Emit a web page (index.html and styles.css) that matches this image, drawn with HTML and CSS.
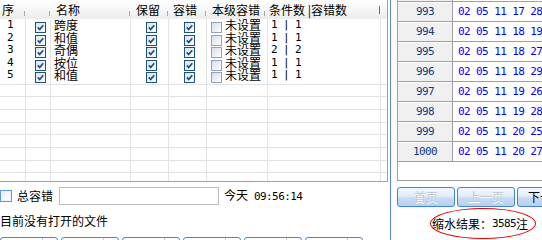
FILE: index.html
```html
<!DOCTYPE html>
<html lang="zh">
<head>
<meta charset="utf-8">
<link rel="stylesheet" href="styles.css">
</head>
<body>
<div class="app">
  <div class="left">
    <div class="table">
      <div class="row head">
        <div class="hc c1"><span>序</span><i class="sep"></i></div>
        <div class="hc c2"><i class="sep"></i></div>
        <div class="hc c3"><span>名称</span><i class="sep"></i></div>
        <div class="hc c4"><span>保留</span><i class="sep"></i></div>
        <div class="hc c5"><span>容错</span><i class="sep"></i></div>
        <div class="hc c6"><span>本级容错</span><i class="sep"></i></div>
        <div class="hc c7"><span>条件数 |容错数</span><i class="sep dark"></i></div>
        <div class="hc c8"></div>
      </div>
      <div class="tbody">
        <div class="row drow">
          <div class="dc c1 num">1</div>
          <div class="dc c2"><span class="cb on"><svg viewBox="0 0 9 9"><path d="M1.8 4.4l1.9 2 3.6-4.2"/></svg></span></div>
          <div class="dc c3">跨度</div>
          <div class="dc c4"><span class="cb on"><svg viewBox="0 0 9 9"><path d="M1.8 4.4l1.9 2 3.6-4.2"/></svg></span></div>
          <div class="dc c5"><span class="cb on"><svg viewBox="0 0 9 9"><path d="M1.8 4.4l1.9 2 3.6-4.2"/></svg></span></div>
          <div class="dc c6"><span class="cb off"></span><span class="lbl">未设置</span></div>
          <div class="dc c7 num">1 | 1</div>
          <div class="dc c8"></div>
        </div>
        <div class="row drow">
          <div class="dc c1 num">2</div>
          <div class="dc c2"><span class="cb on"><svg viewBox="0 0 9 9"><path d="M1.8 4.4l1.9 2 3.6-4.2"/></svg></span></div>
          <div class="dc c3">和值</div>
          <div class="dc c4"><span class="cb on"><svg viewBox="0 0 9 9"><path d="M1.8 4.4l1.9 2 3.6-4.2"/></svg></span></div>
          <div class="dc c5"><span class="cb on"><svg viewBox="0 0 9 9"><path d="M1.8 4.4l1.9 2 3.6-4.2"/></svg></span></div>
          <div class="dc c6"><span class="cb off"></span><span class="lbl">未设置</span></div>
          <div class="dc c7 num">1 | 1</div>
          <div class="dc c8"></div>
        </div>
        <div class="row drow">
          <div class="dc c1 num">3</div>
          <div class="dc c2"><span class="cb on"><svg viewBox="0 0 9 9"><path d="M1.8 4.4l1.9 2 3.6-4.2"/></svg></span></div>
          <div class="dc c3">奇偶</div>
          <div class="dc c4"><span class="cb on"><svg viewBox="0 0 9 9"><path d="M1.8 4.4l1.9 2 3.6-4.2"/></svg></span></div>
          <div class="dc c5"><span class="cb on"><svg viewBox="0 0 9 9"><path d="M1.8 4.4l1.9 2 3.6-4.2"/></svg></span></div>
          <div class="dc c6"><span class="cb off"></span><span class="lbl">未设置</span></div>
          <div class="dc c7 num">2 | 2</div>
          <div class="dc c8"></div>
        </div>
        <div class="row drow">
          <div class="dc c1 num">4</div>
          <div class="dc c2"><span class="cb on"><svg viewBox="0 0 9 9"><path d="M1.8 4.4l1.9 2 3.6-4.2"/></svg></span></div>
          <div class="dc c3">按位</div>
          <div class="dc c4"><span class="cb on"><svg viewBox="0 0 9 9"><path d="M1.8 4.4l1.9 2 3.6-4.2"/></svg></span></div>
          <div class="dc c5"><span class="cb on"><svg viewBox="0 0 9 9"><path d="M1.8 4.4l1.9 2 3.6-4.2"/></svg></span></div>
          <div class="dc c6"><span class="cb off"></span><span class="lbl">未设置</span></div>
          <div class="dc c7 num">1 | 1</div>
          <div class="dc c8"></div>
        </div>
        <div class="row drow">
          <div class="dc c1 num">5</div>
          <div class="dc c2"><span class="cb on"><svg viewBox="0 0 9 9"><path d="M1.8 4.4l1.9 2 3.6-4.2"/></svg></span></div>
          <div class="dc c3">和值</div>
          <div class="dc c4"><span class="cb on"><svg viewBox="0 0 9 9"><path d="M1.8 4.4l1.9 2 3.6-4.2"/></svg></span></div>
          <div class="dc c5"><span class="cb on"><svg viewBox="0 0 9 9"><path d="M1.8 4.4l1.9 2 3.6-4.2"/></svg></span></div>
          <div class="dc c6"><span class="cb off"></span><span class="lbl">未设置</span></div>
          <div class="dc c7 num">1 | 1</div>
          <div class="dc c8"></div>
        </div>
        <div class="filler">
          <div class="fr first"></div>
          <div class="fr"></div>
          <div class="fr"></div>
          <div class="fr"></div>
          <div class="fr"></div>
          <div class="fr"></div>
          <div class="fr"></div>
          <div class="fr"></div>
        </div>
      </div>
    </div>

    <div class="controls">
      <span class="cb big"></span>
      <span class="ctl-label">总容错</span>
      <span class="input"></span>
      <span class="today">今天<span class="num"> 09:56:14</span></span>
    </div>

    <div class="status">目前没有打开的文件</div>

    <div class="tabs">
      <div class="tab"><i></i></div>
      <div class="tab"><i></i></div>
      <div class="tab"><i></i></div>
      <div class="tab"><i></i></div>
      <div class="tab"><i></i></div>
      <div class="tab"><i></i></div>
    </div>
  </div>

  <div class="splitter"></div>

  <div class="right">
    <div class="list">
      <div class="lrow prev"><div class="idx num">992</div><div class="val num">02 05 11 17 27 30</div></div>
      <div class="lrow"><div class="idx num">993</div><div class="val num">02 05 11 17 28 31</div></div>
      <div class="lrow"><div class="idx num">994</div><div class="val num">02 05 11 18 19 30</div></div>
      <div class="lrow"><div class="idx num">995</div><div class="val num">02 05 11 18 27 33</div></div>
      <div class="lrow"><div class="idx num">996</div><div class="val num">02 05 11 18 29 32</div></div>
      <div class="lrow"><div class="idx num">997</div><div class="val num">02 05 11 19 26 31</div></div>
      <div class="lrow"><div class="idx num">998</div><div class="val num">02 05 11 19 28 30</div></div>
      <div class="lrow"><div class="idx num">999</div><div class="val num">02 05 11 20 25 33</div></div>
      <div class="lrow"><div class="idx num">1000</div><div class="val num">02 05 11 20 27 29</div></div>
    </div>
    <div class="pager">
      <button class="btn dis">首页</button>
      <button class="btn dis">上一页</button>
      <button class="btn">下一页</button>
    </div>
    <div class="result">缩水结果：<span class="num">3585</span>注</div>
  </div>
</div>
</body>
</html>
```

FILE: styles.css
```css
* { box-sizing: border-box; }

html, body {
  margin: 0;
  padding: 0;
  background: #fff;
}

body {
  width: 542px;
  height: 240px;
  overflow: hidden;
  font-family: "Noto Sans CJK SC", "Noto Sans", sans-serif;
  font-size: 12px;
  color: #000;
}

.num {
  font-family: "DejaVu Sans Mono", "Liberation Mono", monospace;
  font-size: 11px;
  letter-spacing: -0.6px;
}

.app {
  display: flex;
  width: 542px;
  height: 240px;
  overflow: hidden;
}

/* ---------- left pane ---------- */
.left {
  width: 390px;
  flex: none;
  display: flex;
  flex-direction: column;
}

.table {
  width: 388px;
  height: 182px;
  flex: none;
  border-right: 1px solid #a0a0a0;
  border-bottom: 1px solid #a0a0a0;
  display: flex;
  flex-direction: column;
  overflow: hidden;
}

.row {
  display: grid;
  grid-template-columns: 25px 25px 80px 38px 38px 61px 113px 7px;
}

.head {
  height: 19px;
  flex: none;
  background: linear-gradient(#ffffff 0%, #f7f7f7 45%, #ececec 100%);
}

.hc {
  display: flex;
  justify-content: space-between;
  line-height: 19px;
  white-space: nowrap;
}

.sep {
  width: 1px;
  height: 5px;
  align-self: flex-end;
  margin-bottom: 3px;
  background: #a8a8a8;
  flex: none;
}

.sep.dark {
  height: 8px;
  margin-bottom: 5px;
  background: #6e6e6e;
}

.hc.c1 { padding-left: 2px; }
.hc.c2 { justify-content: flex-end; }
.hc.c3 { padding-left: 6px; }
.hc.c4 { padding-left: 6px; }
.hc.c5 { padding-left: 5px; }
.hc.c6 { padding-left: 6px; padding-right: 2px; }
.hc.c7 { padding-left: 2px; }

.tbody {
  flex: 1;
  display: flex;
  flex-direction: column;
  background-image: linear-gradient(to right,
    transparent 0 25px, #e3e3e3 25px 26px,
    transparent 26px 50px, #e3e3e3 50px 51px,
    transparent 51px 130px, #e3e3e3 130px 131px,
    transparent 131px 168px, #e3e3e3 168px 169px,
    transparent 169px 206px, #e3e3e3 206px 207px,
    transparent 207px 267px, #e3e3e3 267px 268px,
    transparent 268px 380px, #e3e3e3 380px 381px,
    transparent 381px);
}

.drow {
  height: 12.5px;
  flex: none;
  line-height: 12.5px;
}

.dc {
  display: flex;
  align-items: flex-start;
  white-space: nowrap;
}

.dc.c1 { padding-left: 7px; }
.dc.c2 { padding-left: 10px; }
.dc.c3 { padding-left: 4px; }
.dc.c4 { padding-left: 16px; }
.dc.c5 { padding-left: 16px; }
.dc.c6 { padding-left: 5px; }
.dc.c7 { padding-left: 4px; }

.dc .cb { margin-top: 3px; }
.lbl { margin-left: 3px; }

.cb {
  display: inline-block;
  flex: none;
  width: 11px;
  height: 11px;
  border: 1px solid #1c5180;
  background: linear-gradient(135deg, #dce2ea 0%, #f4f6f8 70%, #ffffff 100%);
}

.cb svg {
  display: block;
  width: 9px;
  height: 9px;
}

.cb svg path {
  fill: none;
  stroke: #1f4f8c;
  stroke-width: 1.7;
}

.cb.off {
  border-color: #8ea4bd;
  background: linear-gradient(135deg, #d9dee4 0%, #eef0f3 60%, #ffffff 100%);
}

.filler {
  flex: 1;
  display: flex;
  flex-direction: column;
}

.fr {
  height: 12.67px;
  flex: none;
  border-bottom: 1px solid #e3e3e3;
}

.fr.first { height: 3.3px; }

/* controls */
.controls {
  margin-top: 5px;
  height: 18px;
  display: flex;
  align-items: center;
  flex: none;
}

.cb.big {
  width: 12px;
  height: 12px;
  border: 1px solid #5b9be4;
  background: linear-gradient(135deg, #e3ebf4 0%, #f7f9fc 60%, #ffffff 100%);
  box-shadow: inset 0 0 0 1px #eef4fb;
}

.ctl-label {
  margin-left: 5px;
  line-height: 18px;
}

.input {
  margin-left: 6px;
  width: 160px;
  height: 18px;
  border: 1px solid #bcbcbc;
  background: #fff;
  flex: none;
}

.today {
  margin-left: 5px;
  line-height: 18px;
  white-space: pre;
}

.status {
  margin-top: 9px;
  line-height: 14px;
  flex: none;
}

.tabs {
  margin-top: 9px;
  display: flex;
  gap: 3px;
  flex: none;
}

.tab {
  width: 58px;
  height: 20px;
  border: 1px solid #3a8be0;
  border-radius: 3px 3px 0 0;
  background: linear-gradient(#ffffff, #e4eefa);
  display: flex;
  padding-left: 41px;
}

.tab i {
  width: 1px;
  height: 100%;
  background: #b7d0ee;
}

/* ---------- splitter ---------- */
.splitter {
  width: 1px;
  flex: none;
  background: #5b80f2;
}

/* ---------- right pane ---------- */
.right {
  flex: 1;
  min-width: 0;
  padding-left: 6px;
  display: flex;
  flex-direction: column;
  overflow: hidden;
}

.list {
  height: 181px;
  flex: none;
  border-left: 1px solid #a0a0a0;
  border-bottom: 1px solid #a0a0a0;
  overflow: hidden;
}

.lrow {
  display: grid;
  grid-template-columns: 55px 1fr;
  height: 20px;
  border-bottom: 1px solid #a0a0a0;
}

.lrow.prev { margin-top: -18px; }

.idx {
  background: #f0f0f0;
  border-right: 1px solid #a0a0a0;
  box-shadow: inset 0 1px 0 #ffffff;
  color: #15397f;
  text-align: center;
  line-height: 19px;
}

.val {
  color: #0000ff;
  padding-left: 5px;
  line-height: 19px;
  white-space: pre;
  overflow: hidden;
}

.pager {
  margin-top: 6px;
  display: flex;
  gap: 2px;
  flex: none;
}

.btn {
  width: 58px;
  height: 20px;
  flex: none;
  padding: 0;
  border: 1px solid #3f86d2;
  border-radius: 3px;
  background: linear-gradient(#f3f7fd 0%, #e2ecf9 45%, #c9dbf4 55%, #b8cff0 100%);
  font-family: "Noto Sans CJK SC", sans-serif;
  font-size: 12px;
  line-height: 18px;
  color: #000;
  text-align: center;
}

.btn.dis {
  color: #bcc6d3;
  text-shadow: 0 1px 0 #ffffff;
}

.result {
  margin-top: 1px;
  margin-left: 33px;
  width: 106px;
  height: 31px;
  flex: none;
  border: 1px solid #e00000;
  border-radius: 50%;
  display: flex;
  align-items: center;
  justify-content: center;
  padding-right: 6px;
  white-space: nowrap;
  line-height: 14px;
}
```
